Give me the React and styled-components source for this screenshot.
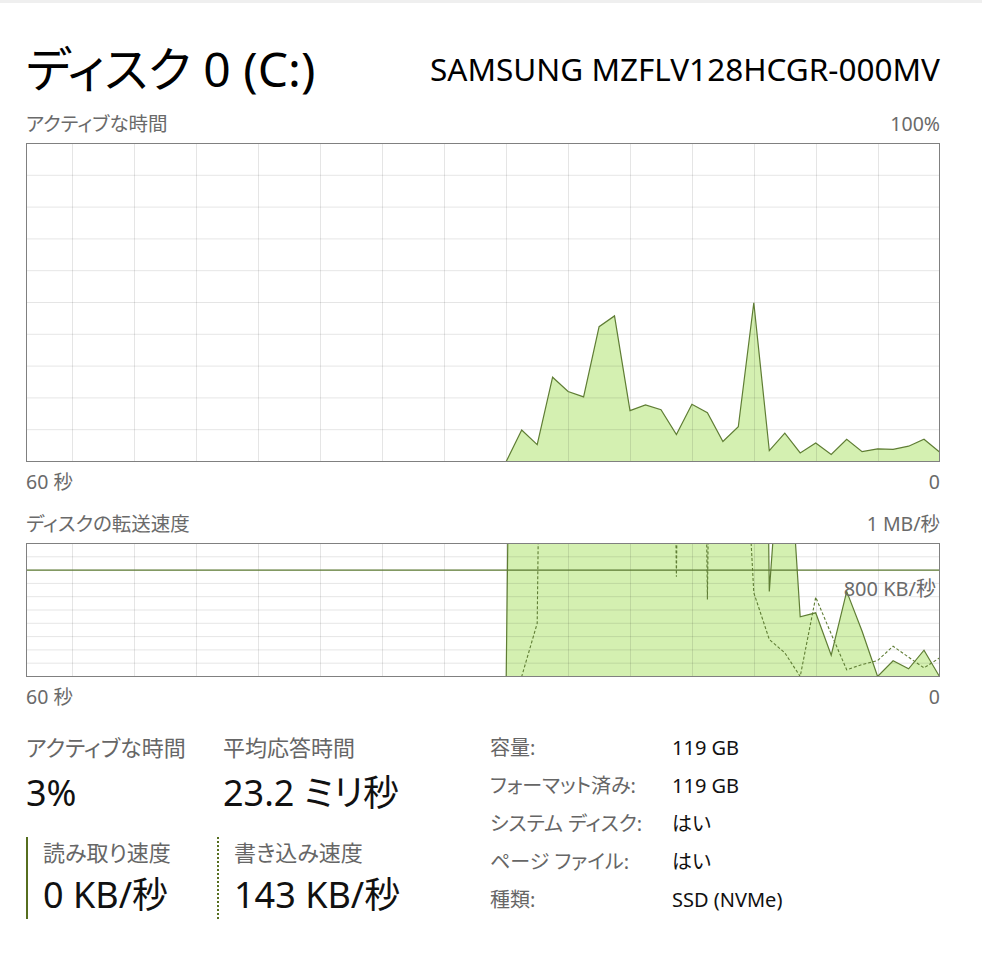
import React from 'react'
import styled, { createGlobalStyle } from 'styled-components'

const GlobalStyle = createGlobalStyle`
  body {
    margin: 0;
    background: #fff;
    font-family: "Noto Sans", "Noto Sans CJK JP", sans-serif;
    font-feature-settings: "palt";
    color: #111;
  }
`

// 60 samples across the chart, history starts at sample 31
const WIDTH = 913
const STEP = WIDTH / 59
const START = 31

const activeTime = [
  0, 9.9, 5.3, 26.5, 22.0, 20.3, 42.4, 45.8, 16.0, 17.8, 16.3, 8.5, 18.0, 15.3, 6.3,
  10.9, 49.9, 3.4, 8.9, 2.7, 5.8, 2.2, 7.0, 3.1, 4.0, 3.8, 4.8, 7.0, 3.0,
]

// MB/s
const readRate = [
  0, 10, 10, 10, 10, 10, 10, 10, 10, 10, 10, 10, 10, 10, 10, 10, 10, 0.64, 2.26,
  0.449, 0.479, 0.16, 0.64, 0.34, 0, 0.118, 0.058, 0.198, 0,
]
const writeRate = [
  0, 0, 0.4, 10, 10, 10, 10, 10, 10, 10, 10, 0.75, 10, 0.58, 10, 2.8, 0.63, 0.278,
  0.178, 0, 0.596, 0.32, 0.05, 0.09, 0.12, 0.228, 0.145, 0.065, 0.14,
]

const xAt = (k) => 0.5 + (START + k) * STEP

const toPoints = (data, h, max) =>
  data.map((v, k) => `${xAt(k).toFixed(1)},${(0.5 + h - (v / max) * h).toFixed(1)}`).join(' ')

const toArea = (data, h, max) => {
  const bottom = (0.5 + h).toFixed(1)
  const last = xAt(data.length - 1).toFixed(1)
  return `${xAt(0).toFixed(1)},${bottom} ${toPoints(data, h, max)} ${last},${bottom}`
}

const GridLines = ({ h, rows }) => {
  const cols = []
  for (let x = 46.5; x < WIDTH; x += 62) cols.push(x)
  const lines = []
  for (let r = 1; r < rows; r++) lines.push(0.5 + (h / rows) * r)
  return (
    <g stroke="rgba(0,0,0,0.1)" strokeWidth="1">
      {cols.map((x) => (
        <line key={`c${x}`} x1={x} y1="0" x2={x} y2={h} />
      ))}
      {lines.map((y) => (
        <line key={`r${y}`} x1="0" y1={y} x2={WIDTH} y2={y} />
      ))}
    </g>
  )
}

const ActiveChart = () => {
  const h = 318
  return (
    <svg width={WIDTH + 1} height={h + 1} style={{ display: 'block' }}>
      <polygon points={toArea(activeTime, h, 100)} fill="#d4f0b1" />
      <GridLines h={h} rows={10} />
      <polyline points={toPoints(activeTime, h, 100)} fill="none" stroke="#5f7d34" strokeWidth="1.2" />
      <rect x="0.5" y="0.5" width={WIDTH} height={h} fill="none" stroke="#808080" />
    </svg>
  )
}

const TransferChart = () => {
  const h = 133
  const limit = (0.5 + h - 0.8 * h).toFixed(1)
  return (
    <svg width={WIDTH + 1} height={h + 1} style={{ display: 'block' }}>
      <defs>
        <clipPath id="transfer-clip">
          <rect x="0" y="0" width={WIDTH + 1} height={h + 1} />
        </clipPath>
      </defs>
      <g clipPath="url(#transfer-clip)">
        <polygon points={toArea(readRate, h, 1)} fill="#d4f0b1" />
        <GridLines h={h} rows={10} />
        <line x1="0" y1={limit} x2={WIDTH} y2={limit} stroke="#5f7d34" strokeWidth="1.2" />
        <polyline points={toPoints(writeRate, h, 1)} fill="none" stroke="#5f7d34" strokeWidth="1.1" strokeDasharray="3 2" />
        <polyline points={toPoints(readRate, h, 1)} fill="none" stroke="#5f7d34" strokeWidth="1.2" />
      </g>
      <rect x="0.5" y="0.5" width={WIDTH} height={h} fill="none" stroke="#808080" />
    </svg>
  )
}

const App = () => {
  return (
    <>
      <GlobalStyle />
      <Page>
        <Header>
          <Title>ディスク 0 (C:)</Title>
          <Model>SAMSUNG MZFLV128HCGR-000MV</Model>
        </Header>

        <ChartSection $gap={6}>
          <LabelRow>
            <span>アクティブな時間</span>
            <span>100%</span>
          </LabelRow>
          <ChartWrap>
            <ActiveChart />
          </ChartWrap>
          <AxisRow>
            <span>60 秒</span>
            <span>0</span>
          </AxisRow>
        </ChartSection>

        <ChartSection $gap={18}>
          <LabelRow>
            <span>ディスクの転送速度</span>
            <span>1 MB/秒</span>
          </LabelRow>
          <ChartWrap>
            <TransferChart />
            <LimitLabel>800 KB/秒</LimitLabel>
          </ChartWrap>
          <AxisRow>
            <span>60 秒</span>
            <span>0</span>
          </AxisRow>
        </ChartSection>

        <Stats>
          <LeftStats>
            <StatItem>
              <StatLabel>アクティブな時間</StatLabel>
              <StatValue>3%</StatValue>
            </StatItem>
            <StatItem $indent={6}>
              <StatLabel>平均応答時間</StatLabel>
              <StatValue>23.2 ミリ秒</StatValue>
            </StatItem>
            <RateItem>
              <RateLabel>読み取り速度</RateLabel>
              <RateValue>0 KB/秒</RateValue>
            </RateItem>
            <RateItem $dotted>
              <RateLabel>書き込み速度</RateLabel>
              <RateValue>143 KB/秒</RateValue>
            </RateItem>
          </LeftStats>
          <InfoGrid>
            <InfoLabel>容量:</InfoLabel>
            <InfoValue>119 GB</InfoValue>
            <InfoLabel>フォーマット済み:</InfoLabel>
            <InfoValue>119 GB</InfoValue>
            <InfoLabel>システム ディスク:</InfoLabel>
            <InfoValue>はい</InfoValue>
            <InfoLabel>ページ ファイル:</InfoLabel>
            <InfoValue>はい</InfoValue>
            <InfoLabel>種類:</InfoLabel>
            <InfoValue>SSD (NVMe)</InfoValue>
          </InfoGrid>
        </Stats>
      </Page>
    </>
  )
}

const Page = styled.div`
  width: 914px;
  padding: 0 42px 40px 26px;
  border-top: 3px solid #efefef;
`

const Header = styled.header`
  display: flex;
  align-items: center;
  justify-content: space-between;
  height: 74px;
  margin-top: 29px;
`

const Title = styled.h1`
  margin: 0;
  font-size: 48px;
  font-weight: 400;
  line-height: 74px;
  color: #000;
`

const Model = styled.div`
  font-size: 31.5px;
  line-height: 74px;
  color: #000;
`

const ChartSection = styled.section`
  margin-top: ${(p) => p.$gap}px;
`

const LabelRow = styled.div`
  display: flex;
  justify-content: space-between;
  font-size: 19.5px;
  line-height: 24px;
  color: #6a6a6a;
  margin-bottom: 7px;
`

const ChartWrap = styled.div`
  position: relative;
`

const AxisRow = styled(LabelRow)`
  margin: 8px 0 0;
`

const LimitLabel = styled.span`
  position: absolute;
  right: 4px;
  top: 34px;
  font-size: 20px;
  line-height: 24px;
  color: #6a6a6a;
`

const Stats = styled.div`
  display: flex;
  margin-top: 20px;
`

const LeftStats = styled.div`
  display: grid;
  grid-template-columns: 191px auto;
  row-gap: 21px;
  width: 464px;
`

const StatItem = styled.div`
  padding-left: ${(p) => p.$indent || 0}px;
`

const StatLabel = styled.div`
  font-size: 22px;
  line-height: 36px;
  color: #666;
`

const StatValue = styled.div`
  margin-top: 6px;
  font-size: 36px;
  line-height: 44px;
  color: #111;
`

const RateItem = styled.div`
  border-left: 2px ${(p) => (p.$dotted ? 'dotted' : 'solid')} #566e1f;
  padding-left: 15px;
`

const RateLabel = styled(StatLabel)`
  line-height: 30px;
`

const RateValue = styled(StatValue)`
  margin-top: 5px;
  line-height: 46px;
`

const InfoGrid = styled.div`
  display: grid;
  grid-template-columns: 182px auto;
  align-content: start;
  font-size: 20px;
  line-height: 38px;
`

const InfoLabel = styled.div`
  color: #666;
  white-space: nowrap;
`

const InfoValue = styled.div`
  color: #111;
`

export default App
